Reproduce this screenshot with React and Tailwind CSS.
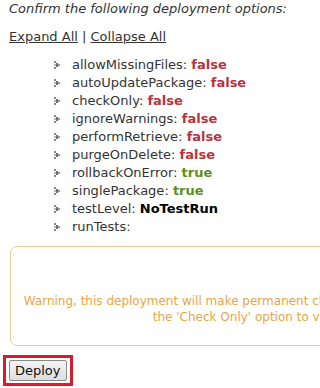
import React from "react";

const Bullet = () => (
  <svg width="6" height="8" viewBox="0 0 6 8" className="shrink-0">
    <rect x="0" y="0" width="2" height="2" fill="#8a8a8a" />
    <rect x="2" y="2" width="2" height="2" fill="#6e6e6e" />
    <rect x="4" y="3" width="2" height="2" fill="#9a9a9a" />
    <rect x="0" y="3" width="2" height="2" fill="#b8b8b8" />
    <rect x="2" y="4" width="2" height="2" fill="#6e6e6e" />
    <rect x="0" y="6" width="2" height="2" fill="#8a8a8a" />
  </svg>
);

const rows = [
  ["allowMissingFiles", "false"],
  ["autoUpdatePackage", "false"],
  ["checkOnly", "false"],
  ["ignoreWarnings", "false"],
  ["performRetrieve", "false"],
  ["purgeOnDelete", "false"],
  ["rollbackOnError", "true"],
  ["singlePackage", "true"],
  ["testLevel", "NoTestRun"],
  ["runTests", ""],
];

function Val({ v }) {
  if (v === "false") return <span className="font-bold text-[#b5343d]">false</span>;
  if (v === "true") return <span className="font-bold text-[#5e8f1f]">true</span>;
  if (!v) return null;
  return <span className="font-bold text-black">{v}</span>;
}

export default function App() {
  return (
    <div className="w-[320px] h-[388px] overflow-hidden bg-white text-[#333] font-['DejaVu_Sans',Verdana,sans-serif]">
      <p className="pl-[9px] text-[13px] leading-[18px] italic">Confirm the following deployment options:</p>
      <div className="pl-[9px] mt-[10px] text-[13px] leading-[18px]">
        <span className="underline">Expand All</span> | <span className="underline">Collapse All</span>
      </div>
      <ul className="mt-[10px] pl-[54px] text-[13px] leading-[18px]">
        {rows.map(([k, v]) => (
          <li key={k} className="flex items-center gap-[12px] h-[18px] whitespace-nowrap">
            <Bullet />
            <span>
              {k}: <Val v={v} />
            </span>
          </li>
        ))}
      </ul>
      <div className="ml-[10px] mt-[10px] w-[748px] rounded-[7px] border border-[#e3cf8e] pt-[46px] pb-[20px] text-center text-[12px] leading-[16px] text-[#eba545] whitespace-nowrap">
        <div>Warning, this deployment will make permanent changes to this organization's metadata and cannot be rolled back. Use</div>
        <div>the 'Check Only' option to validate the deployment without making changes.</div>
      </div>
      <div className="ml-[3px] mt-[9px] inline-flex border-[3px] border-[#d11f2d] px-[3px] py-[2px]">
        <button className="h-[21px] px-[5px] rounded-[2px] border border-[#8a8a8a] bg-gradient-to-b from-[#f4f4f4] to-[#dedede] text-[13px] leading-[19px] text-[#111] font-['DejaVu_Sans',Verdana,sans-serif]">
          Deploy
        </button>
      </div>
    </div>
  );
}
